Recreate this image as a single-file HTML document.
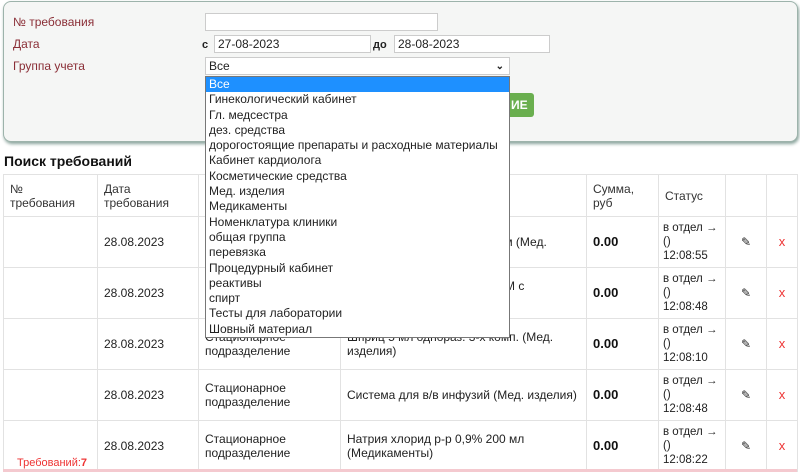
<!DOCTYPE html>
<html><head><meta charset="utf-8"><style>
*{box-sizing:border-box}
body{margin:0;width:800px;height:472px;overflow:hidden;background:#fff;font-family:"Liberation Sans",sans-serif;font-size:12px;color:#222;position:relative}
.panel{position:absolute;left:3px;top:1px;width:795px;height:141px;background:#f5f6f5;border:1px solid #9db3ab;border-radius:8px;box-shadow:1px 2px 3px #8aa49c}
.lbl{position:absolute;left:13px;color:#8a2e36;font-size:12px}
.inp{position:absolute;background:#fff;border:1px solid #ccc;height:18px;font-size:12px;padding:1px 3px;line-height:15px}
.b{position:absolute;font-weight:bold;font-size:11px}
.dd{position:absolute;left:205px;top:76px;width:305px;height:262px;background:#fff;border:1px solid #777;font-size:12px}
.dd div{height:15.3px;line-height:15.3px;padding-left:3px;white-space:nowrap}
.dd .sel{background:#1e90ff;color:#fff}
.btn{position:absolute;left:470px;top:93px;width:64px;height:24px;background:#6aaf4f;border-radius:3px;color:#fff;font-weight:bold;font-size:12px;line-height:24px;padding-left:41px}
h3{position:absolute;left:4px;top:153px;margin:0;font-size:14px;font-weight:bold;color:#111}
table{position:absolute;left:3px;top:174px;border-collapse:collapse;table-layout:fixed}
td{border:1px solid #e2e2e2;padding:0 6px;vertical-align:middle;font-size:12px;line-height:14px;overflow:hidden}
tr.h td{height:42px;color:#333}
tr.r td{height:51px}
td.st{white-space:nowrap;padding:0 4px;font-size:11.5px;line-height:14px}
.s{font-weight:bold;font-size:13px;color:#111}
.x{color:#e33;font-size:13px;text-align:center}
.pen{text-align:center}
.foot{position:absolute;left:17px;top:457px;color:#e33;font-size:11px}
.bar{position:absolute;left:3px;top:469px;width:794px;height:3px;background:#f4c9cf}
</style></head><body>
<div class="panel"></div>
<div class="lbl" style="top:15px">№ требования</div>
<div class="lbl" style="top:37px">Дата</div>
<div class="lbl" style="top:59px">Группа учета</div>
<div class="inp" style="left:205px;top:13px;width:233px"></div>
<div class="b" style="left:202px;top:39px">с</div>
<div class="inp" style="left:214px;top:35px;width:157px">27-08-2023</div>
<div class="b" style="left:373px;top:39px">до</div>
<div class="inp" style="left:394px;top:35px;width:156px">28-08-2023</div>
<div class="inp" style="left:205px;top:57px;width:305px">Все<span style="position:absolute;right:5px;top:1px;font-size:10px;font-weight:bold">&#8964;</span></div>
<div class="btn">ИЕ</div>
<h3>Поиск требований</h3>
<table>
<colgroup><col style="width:94px"><col style="width:101px"><col style="width:142px"><col style="width:246px"><col style="width:72px"><col style="width:67px"><col style="width:41px"><col style="width:31px"></colgroup>
<tr class="h"><td>№<br>требования</td><td>Дата<br>требования</td><td></td><td></td><td>Сумма,<br>руб</td><td>Статус</td><td></td><td></td></tr>
<tr class="r"><td></td><td>28.08.2023</td><td></td><td style="padding-left:150px">.5 м (Мед.</td><td class="s">0.00</td><td class="st">в отдел →<br>()<br>12:08:55</td><td class="pen">✎</td><td class="x">x</td></tr>
<tr class="r"><td></td><td>28.08.2023</td><td></td><td style="padding-left:150px">-р М с<br>я)</td><td class="s">0.00</td><td class="st">в отдел →<br>()<br>12:08:48</td><td class="pen">✎</td><td class="x">x</td></tr>
<tr class="r"><td></td><td>28.08.2023</td><td>Стационарное<br>подразделение</td><td>Шприц 5 мл однораз. 3-х комп. (Мед.<br>изделия)</td><td class="s">0.00</td><td class="st">в отдел →<br>()<br>12:08:10</td><td class="pen">✎</td><td class="x">x</td></tr>
<tr class="r"><td></td><td>28.08.2023</td><td>Стационарное<br>подразделение</td><td>Система для в/в инфузий (Мед. изделия)</td><td class="s">0.00</td><td class="st">в отдел →<br>()<br>12:08:48</td><td class="pen">✎</td><td class="x">x</td></tr>
<tr class="r"><td></td><td>28.08.2023</td><td>Стационарное<br>подразделение</td><td>Натрия хлорид р-р 0,9% 200 мл<br>(Медикаменты)</td><td class="s">0.00</td><td class="st">в отдел →<br>()<br>12:08:22</td><td class="pen">✎</td><td class="x">x</td></tr>
</table>
<div class="foot">Требований:<b>7</b></div>
<div class="bar"></div>
<div class="dd">
<div class="sel">Все</div><div>Гинекологический кабинет</div><div>Гл. медсестра</div><div>дез. средства</div><div>дорогостоящие препараты и расходные материалы</div><div>Кабинет кардиолога</div><div>Косметические средства</div><div>Мед. изделия</div><div>Медикаменты</div><div>Номенклатура клиники</div><div>общая группа</div><div>перевязка</div><div>Процедурный кабинет</div><div>реактивы</div><div>спирт</div><div>Тесты для лаборатории</div><div>Шовный материал</div>
</div>
</body></html>
